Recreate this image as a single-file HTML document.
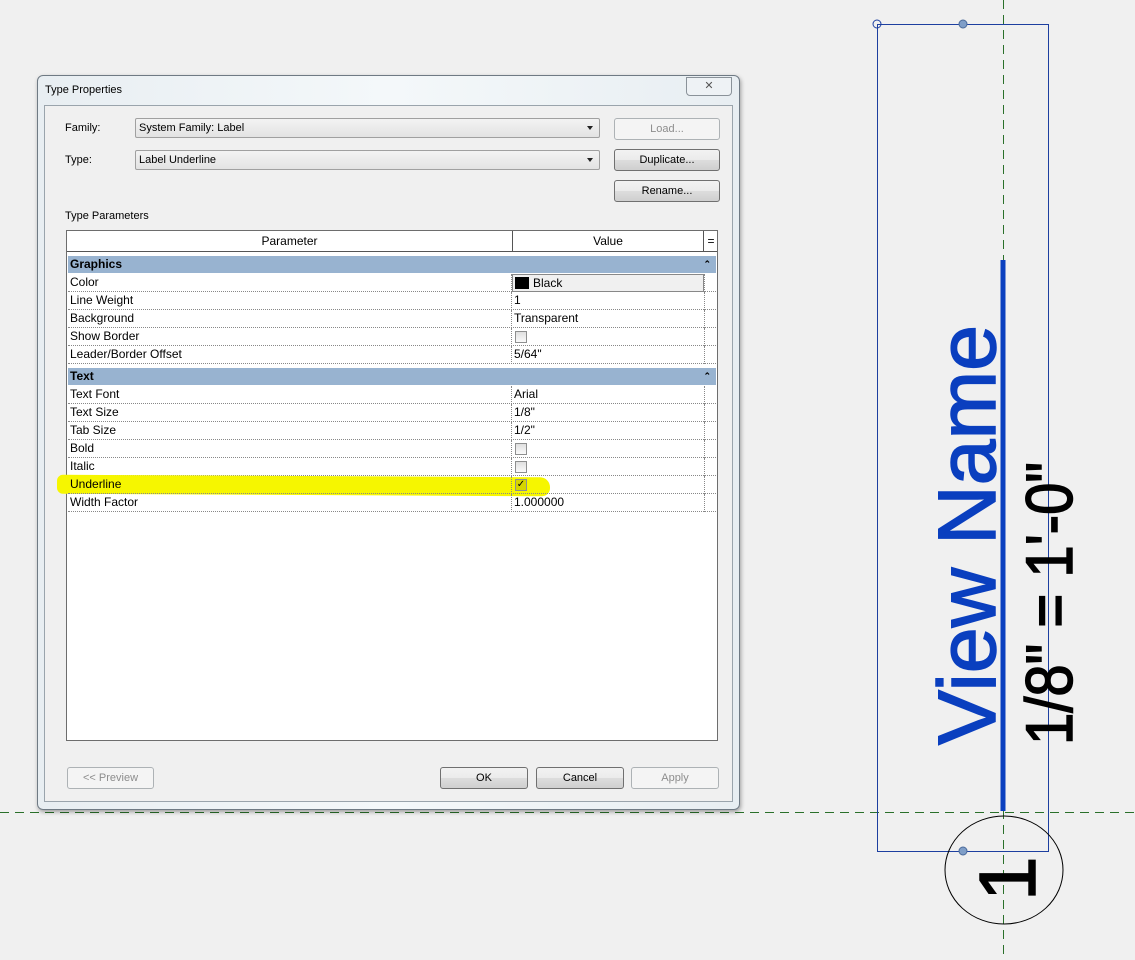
<!DOCTYPE html>
<html><head><meta charset="utf-8"><style>
*{box-sizing:border-box;margin:0;padding:0}
body{width:1135px;height:960px;background:#f0f0f0;position:relative;overflow:hidden;font-family:"Liberation Sans",sans-serif;font-size:11px;color:#000}
.a{position:absolute}
.btn{position:absolute;border:1px solid #707070;border-radius:3px;background:linear-gradient(#f2f2f2,#ebebeb 50%,#dddddd 51%,#cfcfcf);text-align:center;font-size:11px;line-height:20px;height:22px}
.dis{border-color:#adb2b5;background:#f4f4f4;color:#8d8d8d}
.combo{position:absolute;height:20px;border:1px solid #a0a0a0;border-radius:2px;background:linear-gradient(#f3f3f3,#e3e3e3);padding-left:3px;line-height:18px;font-size:11px}
.combo:after{content:"";position:absolute;right:6px;top:7px;border-left:3px solid transparent;border-right:3px solid transparent;border-top:4px solid #222}
.row{position:absolute;left:68px;width:648px;height:18px;border-bottom:1px dotted #888;font-size:12px;line-height:17px}
.row span{position:absolute;left:2px}
.row .v{left:446px}
.row:before{content:"";position:absolute;left:443px;top:0;height:18px;border-left:1px dotted #888}
.row:after{content:"";position:absolute;left:636px;top:0;height:18px;border-left:1px dotted #888}
.grp{position:absolute;left:68px;width:648px;height:17px;background:#98b3d0;font-weight:bold;font-size:12px;line-height:17px;padding-left:2px}
.grp i{position:absolute;right:5px;font-style:normal;font-size:9px;font-weight:bold}
.cb{position:absolute;left:447px;top:3px;width:12px;height:12px;border:1px solid #8e8f8f;background:linear-gradient(#e0e0e0,#fafafa)}
</style></head><body>
<svg class="a" style="left:0;top:0" width="1135" height="960">
<line x1="0" y1="812.5" x2="1135" y2="812.5" stroke="#2a702a" stroke-dasharray="9,6"/>
<line x1="1003.5" y1="0" x2="1003.5" y2="960" stroke="#2a702a" stroke-dasharray="9,6"/>
<rect x="877.5" y="24.5" width="171" height="827" fill="none" stroke="#1d3fa0"/>
<ellipse cx="1004" cy="870" rx="59" ry="54" fill="none" stroke="#000" stroke-width="1"/>
<circle cx="963" cy="24" r="4" fill="#7f9ec8" stroke="#4a6a9a"/>
<circle cx="963" cy="851" r="4" fill="#7f9ec8" stroke="#4a6a9a"/>
<circle cx="877" cy="24" r="4" fill="none" stroke="#1d3fa0"/>
<rect x="1000.5" y="260" width="5" height="551" fill="#0a3fbf"/>
<text x="995" y="745" transform="rotate(-90 995 745)" font-family="Liberation Sans" font-size="82" fill="#0a3fbf" stroke="#0a3fbf" stroke-width="1.5" textLength="420" lengthAdjust="spacingAndGlyphs">View Name</text>
<text x="1072" y="745" transform="rotate(-90 1072 745)" font-family="Liberation Sans" font-size="66" fill="#000" stroke="#000" stroke-width="1.5" textLength="283" lengthAdjust="spacingAndGlyphs">1/8" = 1'-0"</text>
<text x="1035" y="901" transform="rotate(-90 1035 901)" font-family="Liberation Sans" font-size="80" fill="#000" stroke="#000" stroke-width="1.5">1</text>
</svg>
<div class="a" style="left:37px;top:75px;width:703px;height:735px;border:1px solid #6f7a84;border-radius:6px;background:linear-gradient(90deg,#e8eef2,#f4f8fa 50%,#e8eef2);box-shadow:1px 2px 4px rgba(0,0,0,.35)"></div>
<div class="a" style="left:45px;top:84px;font-size:11px">Type Properties</div>
<div class="a" style="left:686px;top:77px;width:46px;height:19px;border:1px solid #8a9299;border-radius:0 0 4px 4px;background:#eef2f5;text-align:center;color:#555;font-size:11px;line-height:17px">✕</div>
<div class="a" style="left:44px;top:105px;width:689px;height:697px;border:1px solid #9aa4ac;background:#f0f0f0"></div>
<div class="a" style="left:65px;top:122px">Family:</div>
<div class="a" style="left:65px;top:154px">Type:</div>
<div class="combo" style="left:135px;top:118px;width:465px">System Family: Label</div>
<div class="combo" style="left:135px;top:150px;width:465px">Label Underline</div>
<div class="btn dis" style="left:614px;top:118px;width:106px">Load...</div>
<div class="btn" style="left:614px;top:149px;width:106px">Duplicate...</div>
<div class="btn" style="left:614px;top:180px;width:106px">Rename...</div>
<div class="a" style="left:65px;top:210px">Type Parameters</div>
<div class="a" style="left:66px;top:230px;width:652px;height:511px;border:1px solid #6d6d6d;background:#fff"></div>
<div class="a" style="left:67px;top:231px;width:650px;height:21px;border-bottom:1px solid #555;background:#fff;font-size:12px;line-height:20px">
<div class="a" style="left:0;width:446px;text-align:center;border-right:1px solid #555;height:20px">Parameter</div>
<div class="a" style="left:446px;width:191px;text-align:center;border-right:1px solid #555;height:20px">Value</div>
<div class="a" style="left:638px;width:12px;text-align:center">=</div>
</div>
<div class="grp" style="top:256px">Graphics<i>&#8963;</i></div>
<div class="row" style="top:274px"><span>Color</span><div class="a" style="left:444px;top:0;width:192px;height:18px;border:1px solid #888;background:#f0f0f0"><div class="a" style="left:2px;top:2px;width:14px;height:12px;background:#000"></div><div class="a" style="left:20px;top:0;font-size:12px">Black</div></div></div>
<div class="row" style="top:292px"><span>Line Weight</span><span class="v">1</span></div>
<div class="row" style="top:310px"><span>Background</span><span class="v">Transparent</span></div>
<div class="row" style="top:328px"><span>Show Border</span><div class="cb"></div></div>
<div class="row" style="top:346px"><span>Leader/Border Offset</span><span class="v">5/64"</span></div>
<div class="grp" style="top:368px">Text<i>&#8963;</i></div>
<div class="row" style="top:386px"><span>Text Font</span><span class="v">Arial</span></div>
<div class="row" style="top:404px"><span>Text Size</span><span class="v">1/8"</span></div>
<div class="row" style="top:422px"><span>Tab Size</span><span class="v">1/2"</span></div>
<div class="row" style="top:440px"><span>Bold</span><div class="cb"></div></div>
<div class="row" style="top:458px"><span>Italic</span><div class="cb"></div></div>
<div class="a" style="left:57px;top:476px;width:493px;height:19px;background:#f6f600;border-radius:6px 10px 8px 6px;transform:rotate(0.3deg)"></div>
<div class="row" style="top:476px"><span>Underline</span><div class="cb" style="background:#d6d600;text-align:center;font-size:10px;line-height:10px">✓</div></div>
<div class="row" style="top:494px"><span>Width Factor</span><span class="v">1.000000</span></div>
<div class="btn dis" style="left:67px;top:767px;width:87px">&lt;&lt; Preview</div>
<div class="btn" style="left:440px;top:767px;width:88px">OK</div>
<div class="btn" style="left:536px;top:767px;width:88px">Cancel</div>
<div class="btn dis" style="left:631px;top:767px;width:88px">Apply</div>
</body></html>
